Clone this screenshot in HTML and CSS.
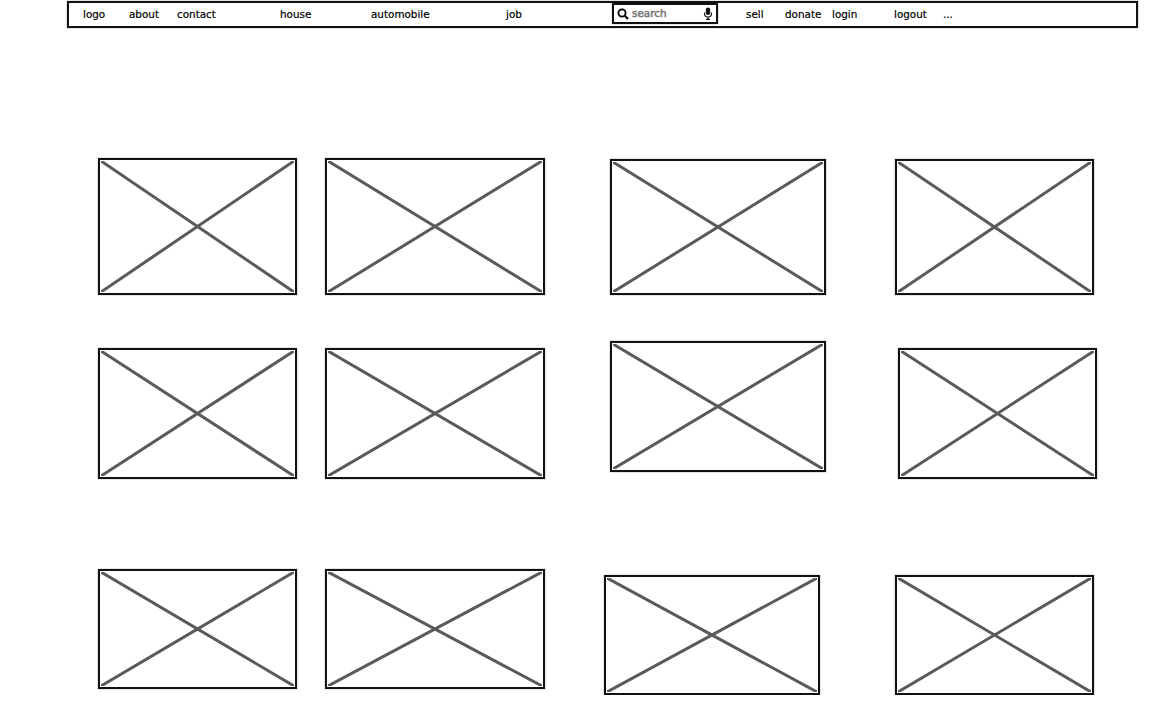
FILE: index.html
```html
<!DOCTYPE html>
<html lang="en">
<head>
  <meta charset="UTF-8" />
  <meta name="viewport" content="width=device-width, initial-scale=1.0"/>
  <title>Classifieds wireframe</title>
  <link rel="stylesheet" href="styles.css">
</head>
<body>
  <nav class="topbar">
    <a>logo</a>
    <a>about</a>
    <a>contact</a>
    <a>house</a>
    <a>automobile</a>
    <a>job</a>
    <div class="search">
      <svg class="search-icon" width="12" height="12" viewBox="0 0 12 12">
        <circle cx="5" cy="5" r="3.6" fill="none" stroke="#000" stroke-width="1.8"/>
        <line x1="7.8" y1="7.8" x2="11" y2="11" stroke="#000" stroke-width="2.2"/>
      </svg>
      <span class="search-text">search</span>
      <svg class="mic-icon" width="10" height="13" viewBox="0 0 10 13">
        <rect x="2.8" y="0.5" width="4.4" height="7.5" rx="2.2" fill="#111"/>
        <path d="M1.5 5.5v1a3.5 3.5 0 0 0 7 0v-1M5 10v2M3 12.3h4" fill="none" stroke="#111" stroke-width="1.2"/>
      </svg>
    </div>
    <a>sell</a>
    <a>donate</a>
    <a>login</a>
    <a>logout</a>
    <a>...</a>
  </nav>

  <main class="gallery">
    <div class="col col-1">
      <div class="ph row-a"><svg><line x1="0" y1="0" x2="100%" y2="100%"/><line x1="100%" y1="0" x2="0" y2="100%"/></svg></div>
      <div class="ph row-b"><svg><line x1="0" y1="0" x2="100%" y2="100%"/><line x1="100%" y1="0" x2="0" y2="100%"/></svg></div>
      <div class="ph row-c"><svg><line x1="0" y1="0" x2="100%" y2="100%"/><line x1="100%" y1="0" x2="0" y2="100%"/></svg></div>
    </div>
    <div class="col col-2">
      <div class="ph row-a"><svg><line x1="0" y1="0" x2="100%" y2="100%"/><line x1="100%" y1="0" x2="0" y2="100%"/></svg></div>
      <div class="ph row-b"><svg><line x1="0" y1="0" x2="100%" y2="100%"/><line x1="100%" y1="0" x2="0" y2="100%"/></svg></div>
      <div class="ph row-c"><svg><line x1="0" y1="0" x2="100%" y2="100%"/><line x1="100%" y1="0" x2="0" y2="100%"/></svg></div>
    </div>
    <div class="col col-3">
      <div class="ph row-a"><svg><line x1="0" y1="0" x2="100%" y2="100%"/><line x1="100%" y1="0" x2="0" y2="100%"/></svg></div>
      <div class="ph row-b"><svg><line x1="0" y1="0" x2="100%" y2="100%"/><line x1="100%" y1="0" x2="0" y2="100%"/></svg></div>
      <div class="ph row-c"><svg><line x1="0" y1="0" x2="100%" y2="100%"/><line x1="100%" y1="0" x2="0" y2="100%"/></svg></div>
    </div>
    <div class="col col-4">
      <div class="ph row-a"><svg><line x1="0" y1="0" x2="100%" y2="100%"/><line x1="100%" y1="0" x2="0" y2="100%"/></svg></div>
      <div class="ph row-b"><svg><line x1="0" y1="0" x2="100%" y2="100%"/><line x1="100%" y1="0" x2="0" y2="100%"/></svg></div>
      <div class="ph row-c"><svg><line x1="0" y1="0" x2="100%" y2="100%"/><line x1="100%" y1="0" x2="0" y2="100%"/></svg></div>
    </div>
  </main>
</body>
</html>
```

FILE: styles.css
```css
* { margin: 0; padding: 0; box-sizing: border-box; }
body {
  font-family: "DejaVu Sans", sans-serif;
  background: #fff;
  color: #000;
  padding-top: 1px;
}

/* top bar */
.topbar {
  display: grid;
  grid-template-columns: 46px 48px 103px 91px 135px 106px 134px 39px 47px 62px 49px 1fr;
  align-items: center;
  width: 1071px;
  height: 27px;
  margin-left: 67px;
  padding: 0 0 2px 14px;
  border: 2px solid #111;
  box-shadow: 0 0 1px rgba(0, 0, 0, 0.6);
  font-size: 10.4px;
  -webkit-text-stroke: 0.2px #000;
}
.search {
  display: flex;
  align-items: center;
  width: 106px;
  height: 21px;
  padding: 0 3px;
  border: 2px solid #111;
  box-shadow: 0 0 1px rgba(0, 0, 0, 0.6);
}
.search-text {
  flex: 1;
  margin: -2px 0 0 3px;
  color: #777;
  -webkit-text-stroke: 0.5px #777;
}

/* placeholders */
.gallery {
  display: flex;
  margin-top: 130px;
  padding-left: 98px;
}
.col {
  display: flex;
  flex-direction: column;
}
.col-1 { width: 199px; }
.col-2 { width: 220px; margin-left: 28px; }
.col-3 { width: 222px; margin-left: 59px; }
.col-4 { width: 202px; margin-left: 69px; }

.ph {
  flex: none;
  border: 2px solid #111;
  box-shadow: 0 0 1px rgba(0, 0, 0, 0.6);
}
.ph svg {
  display: block;
  width: 100%;
  height: 100%;
  padding: 1px;
}
.ph line {
  stroke: #5a5a5a;
  stroke-width: 3;
}
.row-a { height: 137px; }
.row-b { height: 131px; margin-top: 53px; }
.row-c { height: 120px; margin-top: 90px; }

.col-1 .ph { width: 199px; }
.col-2 .ph { width: 220px; }
.col-3 .ph { width: 216px; align-self: flex-end; }
.col-3 .row-a { height: 136px; margin-top: 1px; }
.col-3 .row-b { margin-top: 46px; }
.col-3 .row-c { align-self: flex-start; margin-top: 103px; }
.col-4 .ph { width: 199px; }
.col-4 .row-a { height: 136px; margin-top: 1px; }
.col-4 .row-b { align-self: flex-end; }
.col-4 .row-c { margin-top: 96px; }
```
